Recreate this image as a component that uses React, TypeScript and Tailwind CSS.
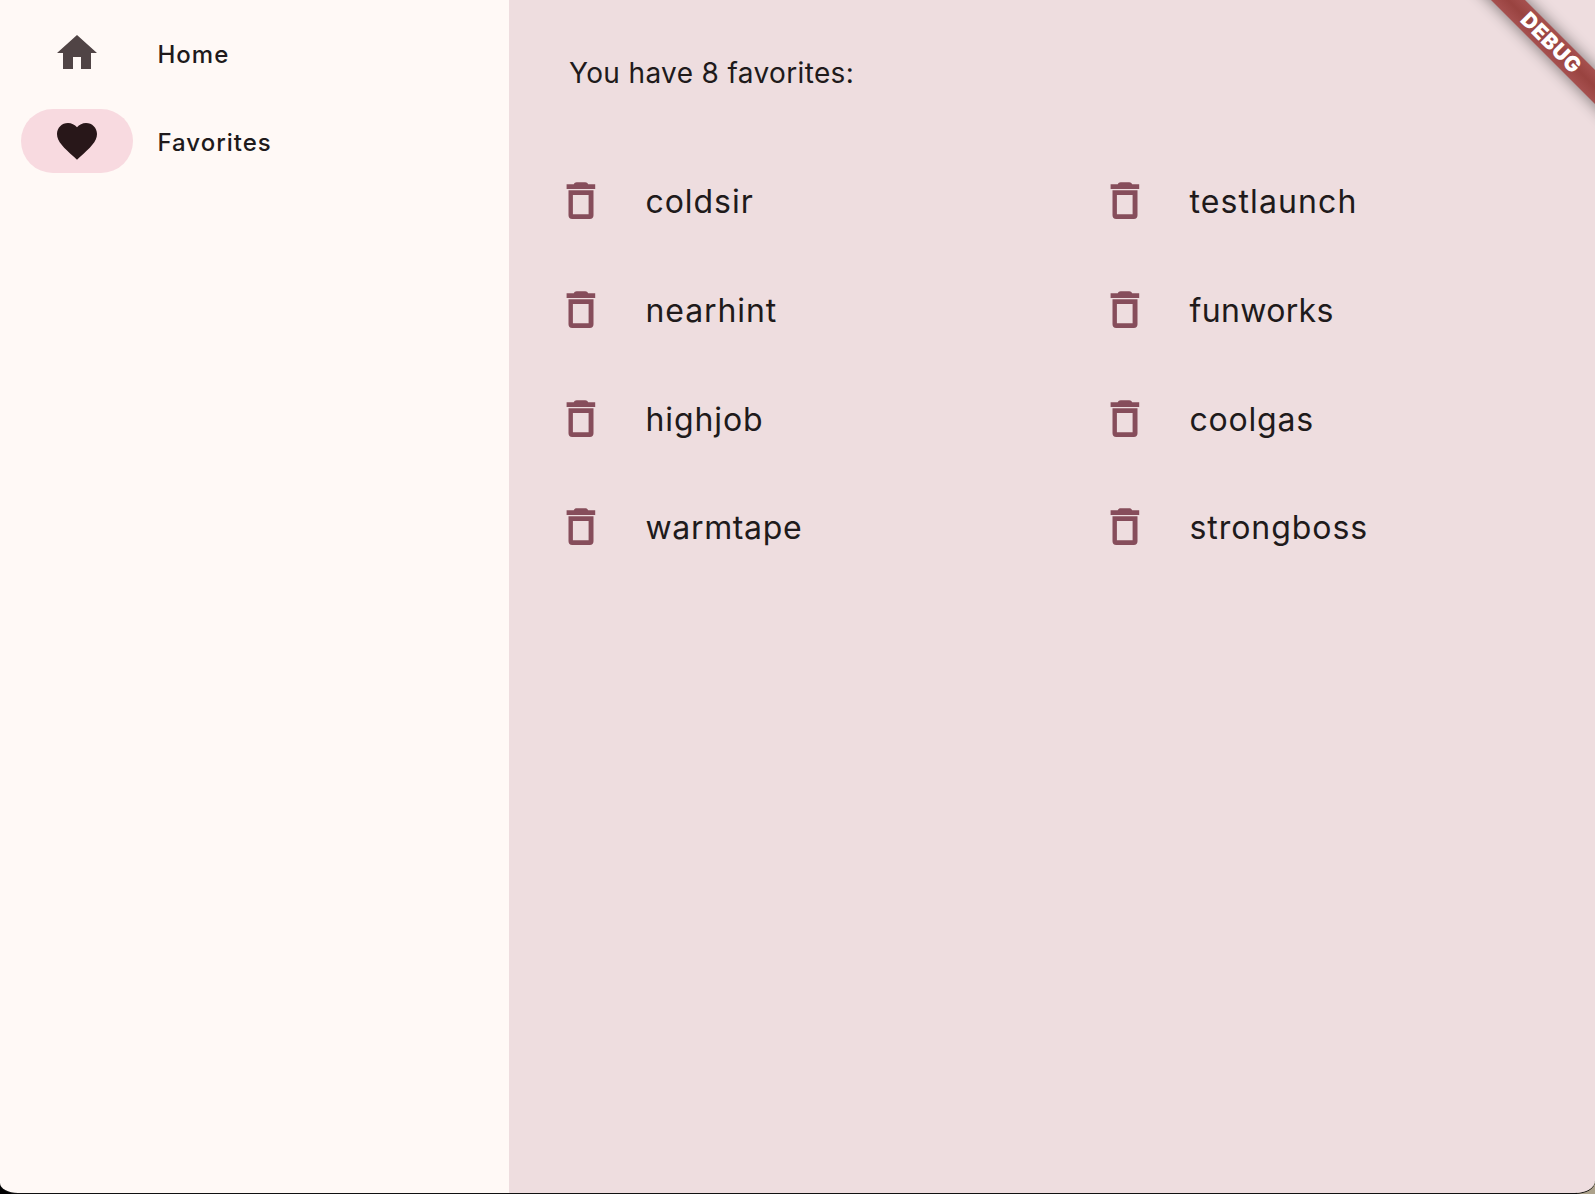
import { MdHome, MdFavorite } from "react-icons/md";

type Entry = { word: string; tracking: string };

const rows: Entry[][] = [
  [
    { word: "coldsir", tracking: "tracking-[0.95px]" },
    { word: "testlaunch", tracking: "tracking-[1.1px]" },
  ],
  [
    { word: "nearhint", tracking: "tracking-[0.9px]" },
    { word: "funworks", tracking: "tracking-[0.35px]" },
  ],
  [
    { word: "highjob", tracking: "tracking-[0.9px]" },
    { word: "coolgas", tracking: "tracking-[0.8px]" },
  ],
  [
    { word: "warmtape", tracking: "tracking-[0.65px]" },
    { word: "strongboss", tracking: "tracking-[0.95px]" },
  ],
];

function TrashIcon() {
  return (
    <svg width="29" height="38" viewBox="0 0 29 38" className="shrink-0 overflow-visible fill-[#864d5b]">
      <path d="M6.700 2.300C7.300 1 8.200.2 9.700.2h8.500c1.500 0 2.400.8 3 2.100h7V7H-.4V2.300z" />
      <path
        fillRule="evenodd"
        d="M1.500 8.300h25v25a3.700 3.700 0 0 1-3.700 3.700H5.200a3.700 3.700 0 0 1-3.700-3.700zM5.900 13v19.200h15.700V13z"
      />
    </svg>
  );
}

function Favorite({ word, tracking }: Entry) {
  return (
    <div className="flex flex-1 items-start">
      <TrashIcon />
      <span className={`ml-[49.5px] mt-[2px] text-[32px] leading-[36px] ${tracking}`}>{word}</span>
    </div>
  );
}

export default function App() {
  return (
    <div className="relative h-[1194px] w-[1595px] overflow-hidden bg-black font-['Inter',sans-serif] text-[#201a1b]">
      <div className="absolute bottom-0 right-0 h-3 w-[18px] bg-[#aca18a]" />
      <div className="relative flex h-[1193px] overflow-hidden rounded-bl-[18px_10px] rounded-br-[20px_12px] shadow-[0_1px_0_#111]">
        <nav className="w-[509px] shrink-0 bg-[#fff9f6] pl-[21px] pt-[20.5px]">
          <div className="flex h-16 items-center">
            <div className="flex w-28 justify-center">
              <MdHome size={48} color="#504445" />
            </div>
            <span className="ml-[24.5px] pt-[4px] text-[24px] font-medium leading-8 tracking-[1px]">Home</span>
          </div>
          <div className="mt-[24.5px] flex h-16 items-center">
            <div className="flex h-16 w-28 items-center justify-center rounded-full bg-[#f8dae0] pb-px">
              <MdFavorite size={48} color="#281719" />
            </div>
            <span className="ml-[24.5px] pt-[4px] text-[24px] font-medium leading-8 tracking-[1px]">Favorites</span>
          </div>
        </nav>
        <main className="min-w-0 flex-1 bg-[#eedddf] pl-[58px]">
          <p className="ml-[2px] pt-[53px] text-[28px] leading-[40px] tracking-[0.36px]">You have 8 favorites:</p>
          <div className="mt-[89px] flex w-[1088px] flex-col gap-[71px]">
            {rows.map((row) => (
              <div key={row[0].word} className="flex h-[38px] last:-mt-px">
                {row.map((entry) => (
                  <Favorite key={entry.word} {...entry} />
                ))}
              </div>
            ))}
          </div>
        </main>
        <div className="absolute right-0 top-0 h-[160px] w-[160px] overflow-hidden">
          <div className="absolute left-[-0.5px] top-[30.5px] h-6 w-[232px] rotate-45">
            <div className="absolute inset-0 bg-black/50 blur-[8px]" />
            <div className="relative flex h-6 items-center justify-center bg-linear-to-b from-[#a6504f] via-[#994340] to-[#a6504f] text-[21px] font-black leading-6 tracking-[0.6px] text-white">
              DEBUG
            </div>
          </div>
        </div>
      </div>
    </div>
  );
}
